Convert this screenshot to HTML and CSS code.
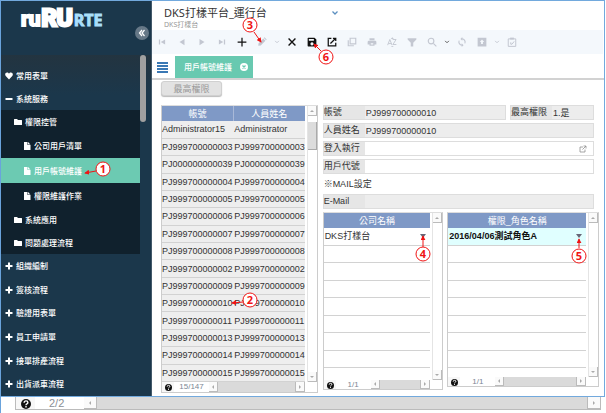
FILE: index.html
```html
<!DOCTYPE html>
<html>
<head>
<meta charset="utf-8">
<title>DKS打樣平台_運行台</title>
<link rel="stylesheet" href="styles.css">
</head>
<body>
<svg width="0" height="0" class="defs" aria-hidden="true">
  <symbol id="heart" viewBox="0 0 16 16"><path d="M8 15 1.5 8.2C-1 5 .8 1 4.2 1 6 1 7.300 2 8 3.400 8.700 2 10 1 11.800 1 15.200 1 17 5 14.500 8.200z"/></symbol>
  <symbol id="minus" viewBox="0 0 16 16"><path d="M1 6h14v4H1z"/></symbol>
  <symbol id="plus" viewBox="0 0 16 16"><path d="M6 1h4v5h5v4h-5v5H6v-5H1V6h5z"/></symbol>
  <symbol id="folder" viewBox="0 0 16 16"><path d="M0 3q0-1 1-1h5l2 2h7q1 0 1 1v8q0 1-1 1H1q-1 0-1-1z"/></symbol>
  <symbol id="file" viewBox="0 0 16 16"><path d="M2 0h7v6h6v10H2zM10 0l5 5h-5z"/></symbol>
  <symbol id="help" viewBox="0 0 16 16"><circle cx="8" cy="8" r="8" fill="#111"/><path d="M5 6q0-3 3-3t3 2.500q0 1.500-1.500 2.200T8 9.800M8 11.300v2.200" fill="none" stroke="#fff" stroke-width="2.200"/></symbol>
  <symbol id="chev" viewBox="0 0 16 16"><path d="m3 5 5 5 5-5" fill="none" stroke="currentColor" stroke-width="2.500"/></symbol>
</svg>
<div class="app">
  <aside class="sidebar">
    <div class="brand">
      <div class="logo"><span class="logo-small">ru</span><span class="logo-big">RU</span><span class="logo-rte">RTE</span></div>
      <button class="collapse" aria-label="Collapse"><svg viewBox="0 0 16 16"><path d="M8 2 3 8l5 6M13 2 8 8l5 6" fill="none" stroke="currentColor" stroke-width="2.500"/></svg></button>
    </div>
    <nav class="menu">
      <div class="menu-thumb"></div>
      <a class="item" href="#"><svg><use href="#heart"/></svg>常用表單</a>
      <a class="item" href="#"><svg><use href="#minus"/></svg>系統服務</a>
      <div class="submenu">
        <a class="item folder" href="#"><svg><use href="#folder"/></svg>權限控管</a>
        <a class="item leaf" href="#"><svg><use href="#file"/></svg>公司用戶清單</a>
        <a class="item leaf active" href="#"><svg><use href="#file"/></svg>用戶帳號維護</a>
        <a class="item leaf" href="#"><svg><use href="#file"/></svg>權限維護作業</a>
        <a class="item folder" href="#"><svg><use href="#folder"/></svg>系統應用</a>
        <a class="item folder" href="#"><svg><use href="#folder"/></svg>問題處理流程</a>
      </div>
      <div class="modules">
        <a class="item" href="#"><svg><use href="#plus"/></svg>組織編制</a>
        <a class="item" href="#"><svg><use href="#plus"/></svg>簽核流程</a>
        <a class="item" href="#"><svg><use href="#plus"/></svg>驗證用表單</a>
        <a class="item" href="#"><svg><use href="#plus"/></svg>員工申請單</a>
        <a class="item" href="#"><svg><use href="#plus"/></svg>接單排產流程</a>
        <a class="item" href="#"><svg><use href="#plus"/></svg>出貨派車流程</a>
      </div>
    </nav>
  </aside>
  <main class="main">
    <header class="head">
      <div>
        <h1>DKS打樣平台_運行台</h1>
        <p>DKS打樣台</p>
      </div>
      <button class="head-chev" aria-label="Switch platform"><svg><use href="#chev"/></svg></button>
    </header>
    <div class="toolbar">
      <button aria-label="First"><svg viewBox="0 0 16 16"><path d="M3 4h2v8H3zM13 4v8L6 8z"/></svg></button>
      <button aria-label="Previous"><svg viewBox="0 0 16 16"><path d="M12 3v10L4 8z"/></svg></button>
      <button aria-label="Next"><svg viewBox="0 0 16 16"><path d="M4 3v10l8-5z"/></svg></button>
      <button aria-label="Last"><svg viewBox="0 0 16 16"><path d="M11 4h2v8h-2zM3 4v8l7-4z"/></svg></button>
      <button class="on" aria-label="Add"><svg viewBox="0 0 16 16"><path d="M7 1h2v6h6v2H9v6H7V9H1V7h6z"/></svg></button>
      <button aria-label="Edit"><svg viewBox="0 0 16 16"><path d="m2 14 .5-4L10 2.500 13.500 6 6 13.500zM11 1.500l1-1L15.500 4l-1 1z"/></svg></button>
      <button class="chev" aria-label="Edit options"><svg><use href="#chev"/></svg></button>
      <button class="on" aria-label="Delete"><svg viewBox="0 0 16 16"><path d="m2.500 2.500 11 11m0-11-11 11" fill="none" stroke="currentColor" stroke-width="2.200"/></svg></button>
      <button class="on" aria-label="Save"><svg viewBox="0 0 16 16"><path fill-rule="evenodd" d="M2 1h10l3 3v10q0 1-1 1H2q-1 0-1-1V2q0-1 1-1zm1 2v3h8V3zm5 5.500a2.500 2.500 0 1 0 .01 0z"/></svg></button>
      <button class="on" aria-label="Open"><svg viewBox="0 0 16 16"><path d="M7 2H2v12h12V9M9.500 2H14v4.500M14 2 5.500 10.500" fill="none" stroke="currentColor" stroke-width="2"/></svg></button>
      <button aria-label="Copy"><svg viewBox="0 0 16 16"><path d="M5 2h9v9H5zM2 5v9h9" fill="none" stroke="currentColor" stroke-width="1.800"/></svg></button>
      <button aria-label="Print"><svg viewBox="0 0 16 16"><path fill-rule="evenodd" d="M4 2h8v3H4zM3 6h10q2 0 2 2v4h-3v2H4v-2H1V8q0-2 2-2zm3 4v2h4v-2z"/></svg></button>
      <button class="az" aria-label="Sort"><svg viewBox="0 0 16 16"><path d="M1 13 4.500 4 8 13M2.300 10.500h4.500M9 4h5.500L9.500 12H15" fill="none" stroke="currentColor" stroke-width="1.500"/><path d="m6 3 2.500-2.500L11 3zM6 14.500h5L8.500 16z"/></svg></button>
      <button aria-label="Filter"><svg viewBox="0 0 16 16"><path d="M1 2h14v2L10 9v6H6V9L1 4z"/></svg></button>
      <button aria-label="Search"><svg viewBox="0 0 16 16"><path d="M10.500 10.500 15 15M11 6.500a4.500 4.500 0 1 1-9 0 4.500 4.500 0 0 1 9 0z" fill="none" stroke="currentColor" stroke-width="1.800"/></svg></button>
      <button class="chev dark" aria-label="Search options"><svg><use href="#chev"/></svg></button>
      <button aria-label="Refresh"><svg viewBox="0 0 16 16"><path d="M8 3a5 5 0 0 1 4.500 7.200M8 13a5 5 0 0 1-4.500-7.200" fill="none" stroke="currentColor" stroke-width="1.800"/><path d="M8.500 0v6l-3-3zM7.500 10v6l3-3z"/></svg></button>
      <button aria-label="Export"><svg viewBox="0 0 16 16"><path fill-rule="evenodd" d="M1 1h14v14H1zm7 3L4.500 8h2v3h3V8h2z"/></svg></button>
      <button class="chev" aria-label="Export options"><svg><use href="#chev"/></svg></button>
      <button aria-label="Approve"><svg viewBox="0 0 16 16"><path d="M2 3h12v12H2zM6 8.500v3h2L11.500 7" fill="none" stroke="currentColor" stroke-width="1.600"/><path d="M5 1h6v3H5z"/></svg></button>
    </div>
    <div class="tabs">
      <button class="burger" aria-label="Menu"><span></span><span></span><span></span><span></span></button>
      <div class="tab">用戶帳號維護<button aria-label="Close tab"><svg viewBox="0 0 16 16"><circle cx="8" cy="8" r="8" fill="#fff"/><path d="m5 5 6 6m0-6-6 6" stroke="#68c9b0" stroke-width="2.500"/></svg></button></div>
    </div>
    <section class="content">
      <button class="action" disabled>最高權限</button>
      <div class="columns">
        <div class="pane users">
          <table>
            <thead><tr><th>帳號</th><th>人員姓名</th></tr></thead>
            <tbody>
              <tr><td>Administrator15</td><td>Administrator</td></tr>
              <tr><td>PJ999700000003</td><td>PJ999700000003</td></tr>
              <tr><td>PJ000000000039</td><td>PJ000000000039</td></tr>
              <tr><td>PJ999700000004</td><td>PJ999700000004</td></tr>
              <tr><td>PJ999700000005</td><td>PJ999700000005</td></tr>
              <tr><td>PJ999700000006</td><td>PJ999700000006</td></tr>
              <tr><td>PJ999700000007</td><td>PJ999700000007</td></tr>
              <tr><td>PJ999700000008</td><td>PJ999700000008</td></tr>
              <tr><td>PJ999700000002</td><td>PJ999700000002</td></tr>
              <tr><td>PJ999700000009</td><td>PJ999700000009</td></tr>
              <tr><td>PJ999700000010</td><td>PJ999700000010</td></tr>
              <tr><td>PJ999700000011</td><td>PJ999700000011</td></tr>
              <tr><td>PJ999700000013</td><td>PJ999700000013</td></tr>
              <tr><td>PJ999700000014</td><td>PJ999700000014</td></tr>
              <tr><td>PJ999700000015</td><td>PJ999700000015</td></tr>
            </tbody>
          </table>
          <div class="vbar"><i class="up"></i><i class="thumb"></i><i class="down"></i></div>
          <div class="hbar"><svg><use href="#help"/></svg><span>15/147</span><i class="left"></i><i class="thumb"></i><i class="right"></i></div>
        </div>
        <div class="detail">
          <form class="form">
            <div class="pair">
              <div class="field gray"><label for="acc">帳號</label><input id="acc" value="PJ999700000010" readonly></div>
              <div class="field gray top"><label for="top">最高權限</label><input id="top" value="1.是" readonly></div>
            </div>
            <div class="field gray"><label for="nm">人員姓名</label><input id="nm" value="PJ999700000010" readonly></div>
            <div class="field"><label for="run">登入執行</label><input id="run"><button type="button" aria-label="Open"><svg viewBox="0 0 16 16"><path d="M8 4H2v10h10V9M9 2h5v5M14 2 7 9" fill="none" stroke="currentColor" stroke-width="1.500"/></svg></button></div>
            <div class="field"><label for="code">用戶代號</label><input id="code"></div>
            <p class="note">※MAIL設定</p>
            <div class="field gray"><label for="mail">E-Mail</label><input id="mail" readonly></div>
          </form>
          <div class="grids">
            <div class="pane company">
              <table>
                <thead><tr><th>公司名稱</th></tr></thead>
                <tbody>
                  <tr><td><div class="pick">DKS打樣台<button aria-label="Choose company"></button></div></td></tr>
                  <tr><td></td></tr><tr><td></td></tr><tr><td></td></tr><tr><td></td></tr><tr><td></td></tr><tr><td></td></tr><tr><td></td></tr>
                </tbody>
              </table>
              <div class="vbar"><i class="up"></i><i class="down"></i></div>
              <div class="hbar"><svg><use href="#help"/></svg><span>1/1</span><i class="left"></i><i class="thumb"></i><i class="right"></i></div>
            </div>
            <div class="pane role">
              <table>
                <thead><tr><th>權限_角色名稱</th></tr></thead>
                <tbody>
                  <tr class="sel"><td><div class="pick">2016/04/06測試角色A<button aria-label="Choose role"></button></div></td></tr>
                  <tr><td></td></tr><tr><td></td></tr><tr><td></td></tr><tr><td></td></tr><tr><td></td></tr><tr><td></td></tr><tr><td></td></tr>
                </tbody>
              </table>
              <div class="vbar"><i class="up"></i><i class="down"></i></div>
              <div class="hbar"><svg><use href="#help"/></svg><span>1/1</span><i class="left"></i><i class="thumb"></i><i class="right"></i></div>
            </div>
          </div>
        </div>
      </div>
    </section>
  </main>
</div>
<footer class="pager"><svg><use href="#help"/></svg><span>2/2</span><i class="left"></i><i class="thumb"></i><i class="right"></i></footer>
<svg class="marks" width="606" height="413" viewBox="0 0 606 413">
  <defs><marker id="tip" viewBox="0 0 6 6" refX="5" refY="3" markerWidth="5" markerHeight="5" markerUnits="userSpaceOnUse" orient="auto"><path d="M0 0 6 3 0 6z" fill="#f01414"/></marker></defs>
  <g class="arrows">
    <path d="M96 171 85 173"/><path d="M243 302 232 303"/><path d="M254 32 261 42"/>
    <path d="M423 247V236"/><path d="M579 248V239"/><path d="M321 51 314 44"/>
  </g>
  <g class="rings">
    <circle cx="103" cy="169" r="7"/><circle cx="250" cy="300" r="7"/><circle cx="250" cy="25" r="7"/>
    <circle cx="423" cy="254" r="7"/><circle cx="579" cy="256" r="7"/><circle cx="326" cy="57" r="7"/>
  </g>
  <g class="nums">
    <text x="103" y="173">1</text><text x="250" y="304">2</text><text x="250" y="29">3</text>
    <text x="423" y="258">4</text><text x="579" y="260">5</text><text x="326" y="61">6</text>
  </g>
</svg>
</body>
</html>
```
FILE: styles.css
```css
* { box-sizing: border-box; margin: 0; padding: 0; }
body {
  display: flex; flex-direction: column; min-height: 100vh;
  background: #fff; border-left: 1px solid #6aa3dc; color: #333;
  font: 9px/12px "Liberation Sans", "Noto Sans CJK TC", sans-serif;
}
button, input { font: inherit; color: inherit; background: none; border: 0; }
button { display: flex; align-items: center; justify-content: center; }
svg { fill: currentColor; flex: none; }
.defs { position: absolute; }
a { color: inherit; text-decoration: none; }

.app {
  flex: 1; display: flex; margin-right: 1px;
  border: 1px solid #72a9dd; border-left: 0;
}

/* sidebar */
.sidebar { display: flex; flex-direction: column; width: 151px; background: #1b374b; border-right: 1px solid #43596a; color: #fff; font-family: "Noto Sans CJK TC", sans-serif; }
.brand { position: relative; height: 54px; padding: 3px 0 0 20px; }
.logo { display: flex; align-items: baseline; font-family: Roboto, sans-serif; font-weight: 700; line-height: 28px; }
.logo-small { font-size: 21px; -webkit-text-stroke: 2px #fff; }
.logo-big { font-size: 24px; -webkit-text-stroke: 3px #fff; margin: 0 1px; }
.logo-rte { font-family: "Open Sans", sans-serif; font-size: 16px; color: #a9defa; -webkit-text-stroke: 1px #a9defa; }
.collapse { position: absolute; right: 2px; top: 25px; width: 14px; height: 14px; border-radius: 50%; background: #667887; }
.collapse svg { width: 8px; height: 8px; }
.menu { position: relative; flex: 1; display: flex; flex-direction: column; padding-top: 9px; background: linear-gradient(#233440, #1b374b 40px); }
.menu-thumb { position: absolute; right: 5px; top: 0; width: 6px; height: 67px; border-radius: 3px; background: #a0a0a0; }
.item { display: flex; align-items: center; gap: 3px; height: 23px; padding-left: 4px; font-size: 8px; font-weight: 500; }
.item svg { width: 8px; height: 8px; }
.submenu { margin-right: 11px; background: #10212d; }
.folder { padding-left: 13px; }
.leaf { height: 25px; padding-left: 22px; }
.active { background: #6ccab2; }
.modules { flex: 1; display: flex; flex-direction: column; }
.modules .item { flex: 1; }

/* header and toolbar */
.main { flex: 1; min-width: 0; display: flex; flex-direction: column; }
.head { display: flex; padding: 4px 12px 0; height: 29px; font-family: "Noto Sans", "Noto Sans CJK TC", sans-serif; }
.head h1 { font-size: 11px; line-height: 15px; font-weight: 400; color: #333; }
.head p { font-size: 7px; line-height: 10px; color: #999; }
.head-chev { width: 8px; height: 15px; margin-left: 64px; color: #5b8fc0; }
.head-chev svg { width: 8px; height: 8px; }
.toolbar { display: flex; height: 24px; margin-right: 1px; background: #f4f8fc; color: #c3c7d1; }
.toolbar button { width: 20px; }
.toolbar svg { width: 10px; height: 10px; }
.toolbar .on { color: #111; }
.toolbar .chev { width: 10px; }
.toolbar .chev svg { width: 6px; height: 6px; }
.toolbar .dark { color: #555; }
.tabs { display: flex; align-items: flex-end; gap: 7px; height: 26px; padding-left: 5px; border-bottom: 2px solid #d2d2d2; }
.burger { flex-direction: column; gap: 1px; width: 11px; height: 22px; }
.burger span { width: 11px; height: 2px; background: #3a78b4; }
.tab { display: flex; align-items: center; gap: 8px; height: 22px; padding: 0 5px 0 9px; background: #68c9b0; color: #fff; font-size: 8px; font-weight: 500; font-family: "Noto Sans CJK TC", sans-serif; }
.tab svg { width: 8px; height: 8px; }

/* content */
.content { flex: 1; display: flex; flex-direction: column; padding: 1px 5px 3px 9px; }
.action { width: 61px; height: 15px; margin-bottom: 9px; border: 1px solid #d0d0d0; border-radius: 3px; background: #e2e2e2; color: #999; box-shadow: 0 1px 1px #bbb; }
.columns { flex: 1; display: grid; grid-template-columns: minmax(0, 157fr) minmax(0, 277fr); gap: 5px; }
.detail { display: flex; flex-direction: column; }

.pane { display: grid; grid-template: 1fr 10px / minmax(0, 1fr) 10px; column-gap: 2px; border: 1px solid #ccc; border-top-color: #ddd; }
.pane table { width: 100%; height: 100%; border-collapse: collapse; table-layout: fixed; }
.pane th { height: 15px; background: #7f99c6; color: #fff; font-weight: 400; line-height: 14px; }
.pane th + th { border-left: 1px solid #a9b9d8; }
.pane td { height: 17px; border-bottom: 1px solid #d2d2d2; padding: 0 0 0 1px; white-space: nowrap; }
.users td { background: #eee; }
.users td:first-child { padding-left: 0; }
.pick { display: flex; justify-content: space-between; align-items: center; }
.pick button { margin-right: 4px; border: 3px solid transparent; border-top: 4px solid #667; border-bottom: 0; }
.sel td { background: #e0ffff; font-weight: bold; color: #111; }

.vbar { display: flex; flex-direction: column; border-left: 1px solid #e4e4e4; }
.vbar .down { margin-top: auto; }
.vbar .thumb { height: 28px; margin-top: 6px; background: #dcdcdc; border-right: 1px solid #aaa; border-bottom: 1px solid #aaa; }
.hbar { grid-column: 1 / -1; display: flex; align-items: stretch; margin-right: 12px; color: #7b8794; font-size: 8px; line-height: 10px; background: #f7f7f7; }
.hbar svg { width: 7px; height: 7px; margin: 2px 2px 0 3px; }
.hbar span { width: 35px; text-align: center; background: #fff; }
.hbar .thumb, .pager .thumb { flex: 1; background: #dadada; border-right: 1px solid #bbb; }
.up, .down, .left, .right { display: flex; align-items: center; justify-content: center; background: #fafafa; border-right: 1px solid #bbb; border-bottom: 1px solid #bbb; }
.up, .down { height: 10px; }
.left, .right { width: 9px; }
.up::before, .down::before, .left::before, .right::before { content: ""; border: 2px solid transparent; }
.up::before { border-bottom-color: #aaa; border-top: 0; }
.down::before { border-top-color: #aaa; border-bottom: 0; }
.left::before { border-right-color: #aaa; border-left: 0; }
.right::before { border-left-color: #aaa; border-right: 0; }

.form { display: flex; flex-direction: column; gap: 3px; margin-right: 5px; }
.pair { display: flex; gap: 4px; }
.pair .field { flex: 1; min-width: 0; }
.pair .top { flex: 0 0 84px; }
.field { display: flex; height: 15px; border: 1px solid #ddd; }
.field label { flex: none; width: 41px; line-height: 13px; background: #e6e6e6; white-space: nowrap; }
.field input { flex: 1; min-width: 0; padding-left: 1px; }
.field button { width: 20px; color: #888; }
.field svg { width: 8px; height: 8px; }
.gray { background: #ededed; }
.note { height: 14px; line-height: 14px; padding-left: 1px; }
.grids { flex: 1; display: grid; grid-template-columns: minmax(0, 121fr) minmax(0, 152fr); gap: 4px; margin-top: 3px; }
.company { margin-bottom: 3px; grid-template-rows: 155px 1fr; }
.role { margin-bottom: 6px; grid-template-rows: 155px 1fr; }
.company .vbar, .role .vbar { grid-area: 1 / 2 / 3 / 3; margin-bottom: 9px; }
.company .hbar, .role .hbar { grid-area: 2 / 1 / 3 / 3; height: 9px; align-self: end; }

/* outer pager */
.pager { display: flex; height: 13px; margin: 0 5px 3px 14px; border: solid #bbb; border-width: 0 0 1px 1px; color: #8a8f96; font-size: 11px; line-height: 12px; background: #f7f7f7; }
.pager svg { width: 10px; height: 10px; margin: 2px 4px 0 5px; }
.pager span { width: 49px; padding-left: 14px; background: #fff; }
.pager .left, .pager .right { width: 13px; }

/* numbered callouts */
.marks { position: absolute; left: 0; top: 0; pointer-events: none; }
.arrows path { fill: none; stroke: #f01414; stroke-width: 1px; marker-end: url(#tip); }
.rings circle { fill: #fff; stroke: #f01414; stroke-width: 1px; }
.nums text { fill: #f01414; font: bold 11px "Open Sans", sans-serif; text-anchor: middle; }
```
